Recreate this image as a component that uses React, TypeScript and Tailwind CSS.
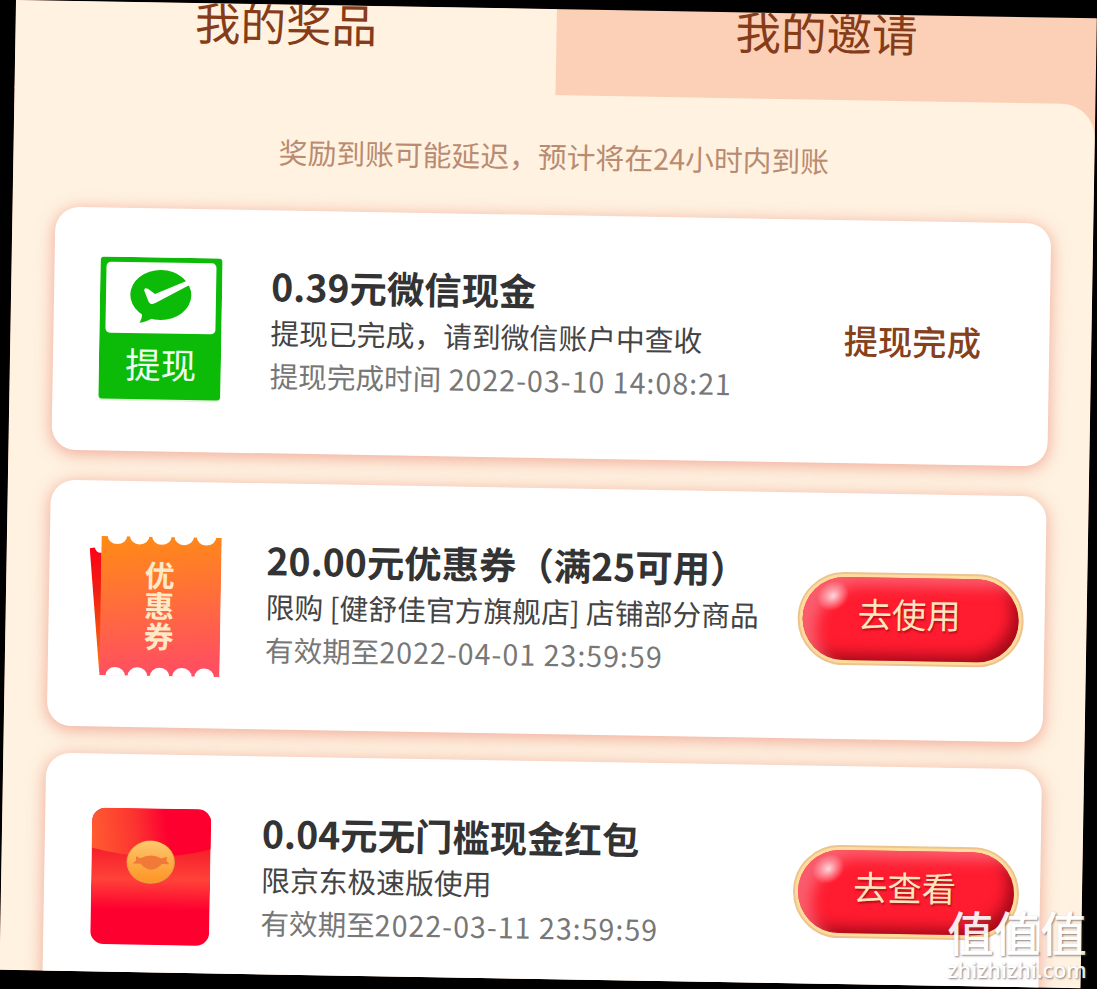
import React from 'react';

interface Reward {
  id: string;
  icon: React.ReactNode;
  title: string;
  description: string;
  dateLabel: string;
  date: string;
  status?: string;
  action?: string;
  cardClass: string;
  bodyClass: string;
}

const WechatIcon = () => (
  <svg width="122" height="144" viewBox="0 0 122 144" className="mt-[48.5px] ml-[46.5px]">
    <rect y="2" width="122" height="142" rx="4" fill="#d8e8c8" opacity="0.6" />
    <rect width="122" height="142" rx="4" fill="#0bbb08" />
    <rect x="6" y="5" width="110" height="71" rx="4.5" fill="#fff" />
    <ellipse cx="60.8" cy="37.5" rx="30.5" ry="25" fill="#0bbb08" />
    <path d="M41.5 54 C43 58 42.5 61 40 65.5 C45.5 65 49.5 62 55.5 60 Z" fill="#0bbb08" />
    <path d="M44 33 C44.5 30.5 46 30.5 48.5 32 L55 36.5 L85 23.5 L92 20 L92 26 L86.5 28.5 L56 45.3 C51.5 47.5 50 47 48.5 44 Z" fill="#fff" />
    <text x="62" y="121" textAnchor="middle" fontSize="35.5" fill="#effff0" className="font-['Noto_Sans_CJK_SC',sans-serif]">提现</text>
  </svg>
);

const NOTCHES = [27.5, 49.8, 72, 94.3, 116.6];

const CouponIcon = () => (
  <svg width="132" height="140" viewBox="0 0 132 140" className="mt-[55px] ml-[40.5px]">
    <defs>
      <linearGradient id="couponFront" x1="0" y1="0" x2="0.1" y2="1">
        <stop offset="0" stopColor="#ff8b14" />
        <stop offset="0.3" stopColor="#ff7a2c" />
        <stop offset="1" stopColor="#ff4f60" />
      </linearGradient>
      <linearGradient id="couponBack" x1="0" y1="0" x2="0" y2="1">
        <stop offset="0" stopColor="#ff0018" />
        <stop offset="0.35" stopColor="#f02010" />
        <stop offset="1" stopColor="#ff7a10" />
      </linearGradient>
    </defs>
    <path d="M0 13 L5 12 Q7 18 12 17 L14 138 L11.5 136 Z" fill="url(#couponBack)" />
    <rect x="11.8" y="0.5" width="120" height="139" fill="url(#couponFront)" />
    {NOTCHES.map(x => (
      <g key={x} fill="#fff">
        <ellipse cx={x} cy="-0.5" rx="9.8" ry="8.8" />
        <ellipse cx={x} cy="140" rx="9.8" ry="8.8" />
      </g>
    ))}
    <g fontSize="30" fontWeight="700" fill="#ffe9c6" textAnchor="middle" className="font-['Noto_Sans_CJK_SC',sans-serif]">
      <text x="70.5" y="50.5">优</text>
      <text x="70.5" y="81">惠</text>
      <text x="70.5" y="111.5">券</text>
    </g>
  </svg>
);

const RedPacketIcon = () => (
  <svg width="119" height="137" viewBox="0 0 119 137" className="mt-[54px] ml-[47.5px]">
    <defs>
      <linearGradient id="packetBody" x1="0" y1="0" x2="0" y2="1">
        <stop offset="0.3" stopColor="#f5202c" />
        <stop offset="0.52" stopColor="#ff4238" />
        <stop offset="0.74" stopColor="#fd0030" />
      </linearGradient>
      <linearGradient id="packetFlap" x1="0" y1="0.2" x2="1" y2="0.15">
        <stop offset="0" stopColor="#ff5a30" />
        <stop offset="0.35" stopColor="#fc3430" />
        <stop offset="0.62" stopColor="#fd0030" />
      </linearGradient>
      <linearGradient id="coin" x1="0" y1="0" x2="0" y2="1">
        <stop offset="0" stopColor="#fcc86e" />
        <stop offset="1" stopColor="#ff9424" />
      </linearGradient>
      <clipPath id="packetClip">
        <rect width="119" height="136.5" rx="13.5" />
      </clipPath>
    </defs>
    <g clipPath="url(#packetClip)">
      <rect width="119" height="137" fill="url(#packetBody)" />
      <path d="M0 0 H119 V40 Q60 56 0 40 Z" fill="url(#packetFlap)" />
    </g>
    <ellipse cx="59.3" cy="53.8" rx="24.2" ry="21.6" fill="#e8a23c" />
    <ellipse cx="59.3" cy="53.2" rx="23" ry="20.6" fill="url(#coin)" />
    <path
      d="M49 50 Q59.5 44 70 50 L75.5 48 L75 52 L78 55.5 L70.5 55.5 Q60 67 49 55.5 L41 55.5 L44.5 52.5 L44.5 48 Z"
      fill="#f07a36"
    />
  </svg>
);

const rewards: Reward[] = [
  {
    id: 'cash',
    icon: <WechatIcon />,
    title: '0.39元微信现金',
    description: '提现已完成，请到微信账户中查收',
    dateLabel: '提现完成时间',
    date: ' 2022-03-10 14:08:21',
    status: '提现完成',
    cardClass: 'h-[243px] mb-[29.5px]',
    bodyClass: 'pt-[49px]',
  },
  {
    id: 'coupon',
    icon: <CouponIcon />,
    title: '20.00元优惠券（满25可用）',
    description: '限购 [健舒佳官方旗舰店] 店铺部分商品',
    dateLabel: '有效期至',
    date: '2022-04-01 23:59:59',
    action: '去使用',
    cardClass: 'h-[246px] mb-[27px]',
    bodyClass: 'pt-[50.5px]',
  },
  {
    id: 'packet',
    icon: <RedPacketIcon />,
    title: '0.04元无门槛现金红包',
    description: '限京东极速版使用',
    dateLabel: '有效期至',
    date: '2022-03-11 23:59:59',
    action: '去查看',
    cardClass: 'h-[246px]',
    bodyClass: 'pt-[50.5px]',
  },
];

const ActionButton = ({ label }: { label: string }) => (
  <button className="mt-[79.5px] h-[93px] w-[226px] rounded-full border-2 border-[#ecc48f] bg-[#ffdc9c] p-[3px]">
    <span className="relative flex h-full w-full items-center justify-center overflow-hidden rounded-full bg-[#ff1c30] pr-[3px] pb-[13px] text-[34.3px] leading-none text-[#ffe6bf] shadow-[inset_18px_12px_14px_-4px_rgba(250,100,115,0.9),inset_-9px_-9px_14px_-3px_rgba(140,5,20,0.8)] [text-shadow:1px_2px_2px_rgba(140,0,10,0.6)]">
      <span className="absolute top-[5px] left-[13px] h-[28px] w-[34px] -rotate-35 rounded-full bg-[radial-gradient(ellipse,rgba(255,245,245,0.85)_0%,rgba(255,215,220,0.55)_30%,rgba(255,160,170,0)_70%)]" />
      {label}
    </span>
  </button>
);

const RewardCard = ({ reward }: { reward: Reward }) => (
  <div className={`flex w-[996px] shrink-0 rounded-[24px] bg-white shadow-[0_3px_16px_1px_rgba(228,105,85,0.5)] ${reward.cardClass}`}>
    <div className="w-[217.5px] shrink-0">{reward.icon}</div>
    <div className={`w-[532px] shrink-0 whitespace-nowrap ${reward.bodyClass}`}>
      <h3 className="h-[52px] text-[37.4px] leading-[52px] font-bold text-[#333]">{reward.title}</h3>
      <p className="h-[42px] text-[28.8px] leading-[42px] text-[#444]">{reward.description}</p>
      <p className="h-[43px] text-[28.6px] leading-[43px] text-[#777]">
        {reward.dateLabel}
        <span className="tracking-[1px] whitespace-pre">{reward.date}</span>
      </p>
    </div>
    {reward.action && <ActionButton label={reward.action} />}
    {reward.status && (
      <div className="flex w-[220px] items-center justify-center pb-[5px] text-[34.3px] leading-none font-medium text-[#86401c]">
        {reward.status}
      </div>
    )}
  </div>
);

const App: React.FC = () => {
  return (
    <div className="relative h-[989px] w-full overflow-hidden bg-black pl-[16px] font-['Noto_Sans_CJK_SC',sans-serif]">
      <div className="h-[970px] w-[1081px] origin-top-left rotate-[0.97deg] overflow-hidden bg-[#fbd0b7]">
        <div className="flex h-[86px] text-[45.5px] leading-[34px] text-[#863c18]">
          <div className="h-[88px] w-[541px] shrink-0 bg-[#fff2e1] text-center">我的奖品</div>
          <div className="w-[540px] shrink-0 text-center">我的邀请</div>
        </div>

        <div className="flex h-[884px] flex-col items-center rounded-tr-[34px] bg-[#fff2e1]">
          <p className="h-[120px] shrink-0 pt-[39.5px] text-[28.8px] leading-[42px] text-[#b98b70]">
            奖励到账可能延迟，预计将在24小时内到账
          </p>
          {rewards.map(reward => (
            <RewardCard key={reward.id} reward={reward} />
          ))}
        </div>
      </div>

      <div className="absolute top-[907px] left-[946px] w-[142px] text-center whitespace-nowrap text-white [text-shadow:1px_1px_2px_rgba(90,70,70,0.75)]">
        <div className="text-[46.5px] leading-[48px] font-medium opacity-90">值值值</div>
        <div className="font-['Open_Sans',sans-serif] text-[21.4px] leading-[30px] font-semibold opacity-90">zhizhizhi.com</div>
      </div>
    </div>
  );
};

export default App;
